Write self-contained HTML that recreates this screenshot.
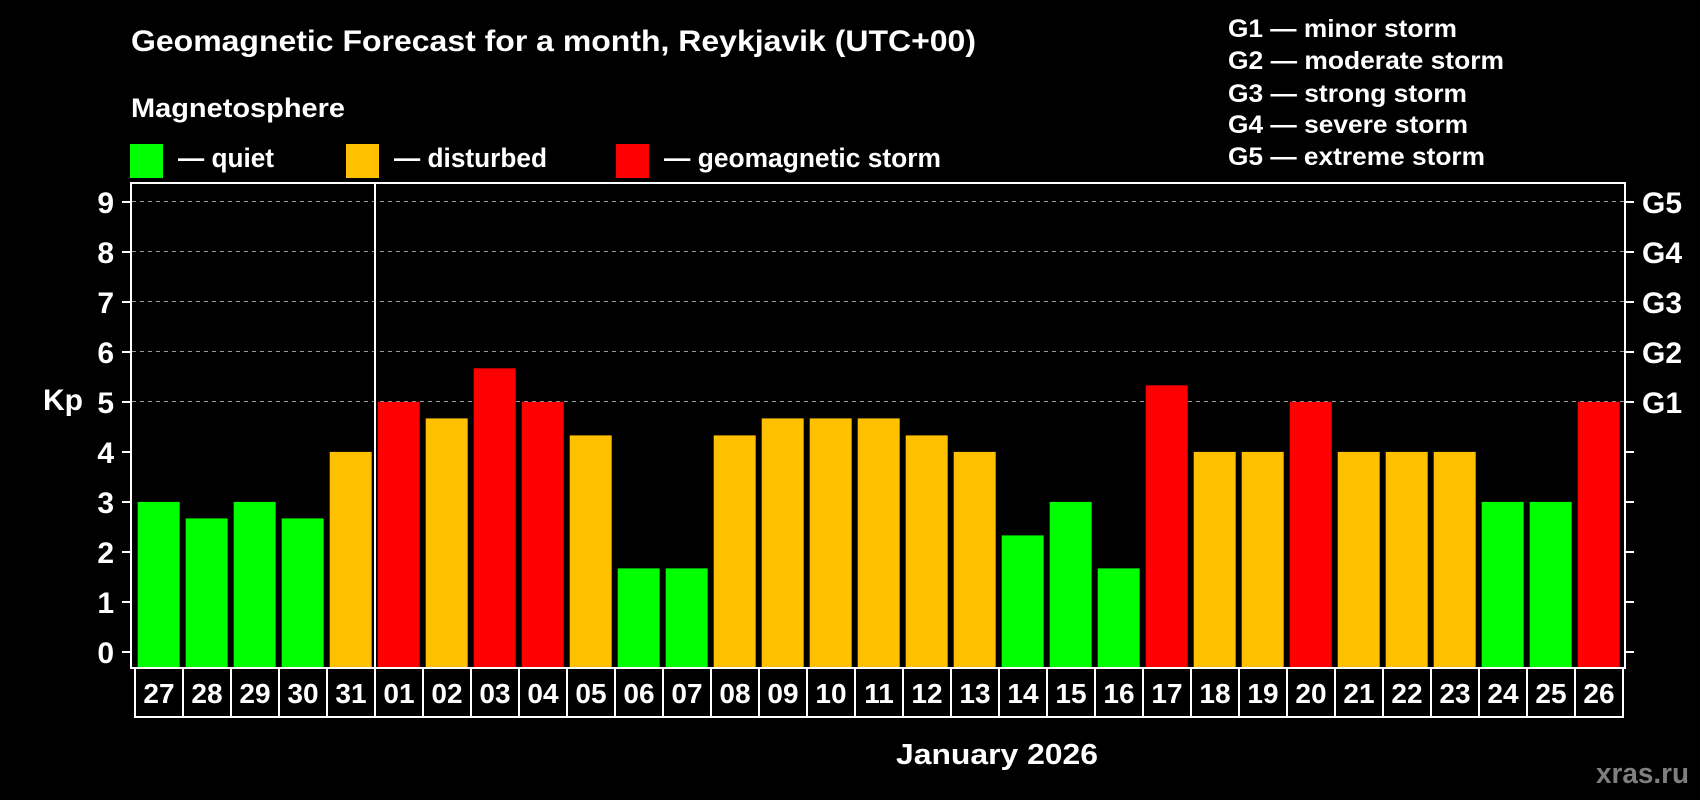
<!DOCTYPE html>
<html><head><meta charset="utf-8"><style>
html,body{margin:0;padding:0;background:#000;}
svg{display:block;}
text{font-family:"Liberation Sans",Arial,sans-serif;font-weight:bold;fill:#fff;}
</style></head><body>
<svg width="1700" height="800" viewBox="0 0 1700 800" xmlns="http://www.w3.org/2000/svg">
<rect width="1700" height="800" fill="#000"/>
<text x="131" y="51" font-size="30" textLength="845" lengthAdjust="spacingAndGlyphs">Geomagnetic Forecast for a month, Reykjavik (UTC+00)</text>
<text x="131" y="117" font-size="27" textLength="214" lengthAdjust="spacingAndGlyphs">Magnetosphere</text>
<rect x="130" y="144" width="33" height="34" fill="#00ff00"/>
<text x="178" y="167" font-size="27" textLength="96" lengthAdjust="spacingAndGlyphs">— quiet</text>
<rect x="346" y="144" width="33" height="34" fill="#ffc000"/>
<text x="394" y="167" font-size="27" textLength="153" lengthAdjust="spacingAndGlyphs">— disturbed</text>
<rect x="616" y="144" width="33" height="34" fill="#ff0000"/>
<text x="664" y="167" font-size="27" textLength="277" lengthAdjust="spacingAndGlyphs">— geomagnetic storm</text>
<g font-size="25">
<text x="1228" y="37" textLength="229" lengthAdjust="spacingAndGlyphs">G1 — minor storm</text>
<text x="1228" y="69" textLength="276" lengthAdjust="spacingAndGlyphs">G2 — moderate storm</text>
<text x="1228" y="102" textLength="239" lengthAdjust="spacingAndGlyphs">G3 — strong storm</text>
<text x="1228" y="133" textLength="240" lengthAdjust="spacingAndGlyphs">G4 — severe storm</text>
<text x="1228" y="165" textLength="257" lengthAdjust="spacingAndGlyphs">G5 — extreme storm</text>
</g>
<g stroke="#9a9a9a" stroke-width="1" stroke-dasharray="4,4">
<line x1="132" y1="201.5" x2="1624" y2="201.5"/>
<line x1="132" y1="251.5" x2="1624" y2="251.5"/>
<line x1="132" y1="301.5" x2="1624" y2="301.5"/>
<line x1="132" y1="351.5" x2="1624" y2="351.5"/>
<line x1="132" y1="401.5" x2="1624" y2="401.5"/>
</g>
<g>
<rect x="137.7" y="501.9" width="42" height="166.1" fill="#00ff00"/>
<rect x="185.7" y="518.4" width="42" height="149.6" fill="#00ff00"/>
<rect x="233.7" y="501.9" width="42" height="166.1" fill="#00ff00"/>
<rect x="281.7" y="518.4" width="42" height="149.6" fill="#00ff00"/>
<rect x="329.7" y="451.9" width="42" height="216.1" fill="#ffc000"/>
<rect x="377.7" y="401.9" width="42" height="266.1" fill="#ff0000"/>
<rect x="425.7" y="418.4" width="42" height="249.6" fill="#ffc000"/>
<rect x="473.7" y="368.3" width="42" height="299.7" fill="#ff0000"/>
<rect x="521.7" y="401.9" width="42" height="266.1" fill="#ff0000"/>
<rect x="569.7" y="435.4" width="42" height="232.6" fill="#ffc000"/>
<rect x="617.7" y="568.4" width="42" height="99.6" fill="#00ff00"/>
<rect x="665.7" y="568.4" width="42" height="99.6" fill="#00ff00"/>
<rect x="713.7" y="435.4" width="42" height="232.6" fill="#ffc000"/>
<rect x="761.7" y="418.4" width="42" height="249.6" fill="#ffc000"/>
<rect x="809.7" y="418.4" width="42" height="249.6" fill="#ffc000"/>
<rect x="857.7" y="418.4" width="42" height="249.6" fill="#ffc000"/>
<rect x="905.7" y="435.4" width="42" height="232.6" fill="#ffc000"/>
<rect x="953.7" y="451.9" width="42" height="216.1" fill="#ffc000"/>
<rect x="1001.7" y="535.4" width="42" height="132.6" fill="#00ff00"/>
<rect x="1049.7" y="501.9" width="42" height="166.1" fill="#00ff00"/>
<rect x="1097.7" y="568.4" width="42" height="99.6" fill="#00ff00"/>
<rect x="1145.7" y="385.3" width="42" height="282.7" fill="#ff0000"/>
<rect x="1193.7" y="451.9" width="42" height="216.1" fill="#ffc000"/>
<rect x="1241.7" y="451.9" width="42" height="216.1" fill="#ffc000"/>
<rect x="1289.7" y="401.9" width="42" height="266.1" fill="#ff0000"/>
<rect x="1337.7" y="451.9" width="42" height="216.1" fill="#ffc000"/>
<rect x="1385.7" y="451.9" width="42" height="216.1" fill="#ffc000"/>
<rect x="1433.7" y="451.9" width="42" height="216.1" fill="#ffc000"/>
<rect x="1481.7" y="501.9" width="42" height="166.1" fill="#00ff00"/>
<rect x="1529.7" y="501.9" width="42" height="166.1" fill="#00ff00"/>
<rect x="1577.7" y="401.9" width="42" height="266.1" fill="#ff0000"/>
</g>
<rect x="131" y="183" width="1494" height="485" fill="none" stroke="#fff" stroke-width="2"/>
<line x1="375" y1="183" x2="375" y2="668" stroke="#fff" stroke-width="2"/>
<rect x="135" y="668" width="1488" height="49" fill="none" stroke="#fff" stroke-width="2"/>
<g stroke="#fff" stroke-width="2">
<line x1="183" y1="668" x2="183" y2="717"/><line x1="231" y1="668" x2="231" y2="717"/><line x1="279" y1="668" x2="279" y2="717"/><line x1="327" y1="668" x2="327" y2="717"/><line x1="375" y1="668" x2="375" y2="717"/><line x1="423" y1="668" x2="423" y2="717"/><line x1="471" y1="668" x2="471" y2="717"/><line x1="519" y1="668" x2="519" y2="717"/><line x1="567" y1="668" x2="567" y2="717"/><line x1="615" y1="668" x2="615" y2="717"/><line x1="663" y1="668" x2="663" y2="717"/><line x1="711" y1="668" x2="711" y2="717"/><line x1="759" y1="668" x2="759" y2="717"/><line x1="807" y1="668" x2="807" y2="717"/><line x1="855" y1="668" x2="855" y2="717"/><line x1="903" y1="668" x2="903" y2="717"/><line x1="951" y1="668" x2="951" y2="717"/><line x1="999" y1="668" x2="999" y2="717"/><line x1="1047" y1="668" x2="1047" y2="717"/><line x1="1095" y1="668" x2="1095" y2="717"/><line x1="1143" y1="668" x2="1143" y2="717"/><line x1="1191" y1="668" x2="1191" y2="717"/><line x1="1239" y1="668" x2="1239" y2="717"/><line x1="1287" y1="668" x2="1287" y2="717"/><line x1="1335" y1="668" x2="1335" y2="717"/><line x1="1383" y1="668" x2="1383" y2="717"/><line x1="1431" y1="668" x2="1431" y2="717"/><line x1="1479" y1="668" x2="1479" y2="717"/><line x1="1527" y1="668" x2="1527" y2="717"/><line x1="1575" y1="668" x2="1575" y2="717"/>
</g>
<g font-size="28" text-anchor="middle">
<text x="159" y="703">27</text><text x="207" y="703">28</text><text x="255" y="703">29</text><text x="303" y="703">30</text><text x="351" y="703">31</text><text x="399" y="703">01</text><text x="447" y="703">02</text><text x="495" y="703">03</text><text x="543" y="703">04</text><text x="591" y="703">05</text><text x="639" y="703">06</text><text x="687" y="703">07</text><text x="735" y="703">08</text><text x="783" y="703">09</text><text x="831" y="703">10</text><text x="879" y="703">11</text><text x="927" y="703">12</text><text x="975" y="703">13</text><text x="1023" y="703">14</text><text x="1071" y="703">15</text><text x="1119" y="703">16</text><text x="1167" y="703">17</text><text x="1215" y="703">18</text><text x="1263" y="703">19</text><text x="1311" y="703">20</text><text x="1359" y="703">21</text><text x="1407" y="703">22</text><text x="1455" y="703">23</text><text x="1503" y="703">24</text><text x="1551" y="703">25</text><text x="1599" y="703">26</text>
</g>
<g stroke="#fff" stroke-width="2">
<line x1="122" y1="652" x2="131" y2="652"/><line x1="122" y1="602" x2="131" y2="602"/><line x1="122" y1="552" x2="131" y2="552"/><line x1="122" y1="502" x2="131" y2="502"/><line x1="122" y1="452" x2="131" y2="452"/><line x1="122" y1="402" x2="131" y2="402"/><line x1="122" y1="352" x2="131" y2="352"/><line x1="122" y1="302" x2="131" y2="302"/><line x1="122" y1="252" x2="131" y2="252"/><line x1="122" y1="202" x2="131" y2="202"/>
<line x1="1625" y1="652" x2="1634" y2="652"/><line x1="1625" y1="602" x2="1634" y2="602"/><line x1="1625" y1="552" x2="1634" y2="552"/><line x1="1625" y1="502" x2="1634" y2="502"/><line x1="1625" y1="452" x2="1634" y2="452"/><line x1="1625" y1="402" x2="1634" y2="402"/><line x1="1625" y1="352" x2="1634" y2="352"/><line x1="1625" y1="302" x2="1634" y2="302"/><line x1="1625" y1="252" x2="1634" y2="252"/><line x1="1625" y1="202" x2="1634" y2="202"/>
</g>
<g font-size="30" text-anchor="end">
<text x="114" y="663">0</text><text x="114" y="613">1</text><text x="114" y="563">2</text><text x="114" y="513">3</text><text x="114" y="463">4</text><text x="114" y="413">5</text><text x="114" y="363">6</text><text x="114" y="313">7</text><text x="114" y="263">8</text><text x="114" y="213">9</text>
</g>
<g font-size="30">
<text x="1642" y="413">G1</text><text x="1642" y="363">G2</text><text x="1642" y="313">G3</text><text x="1642" y="263">G4</text><text x="1642" y="213">G5</text>
</g>
<text x="43" y="410" font-size="30">Kp</text>
<text x="896" y="764" font-size="29" textLength="202" lengthAdjust="spacingAndGlyphs">January 2026</text>
<text x="1596" y="783" font-size="29" style="fill:#7f7f7f" textLength="93" lengthAdjust="spacingAndGlyphs">xras.ru</text>
</svg>
</body></html>
